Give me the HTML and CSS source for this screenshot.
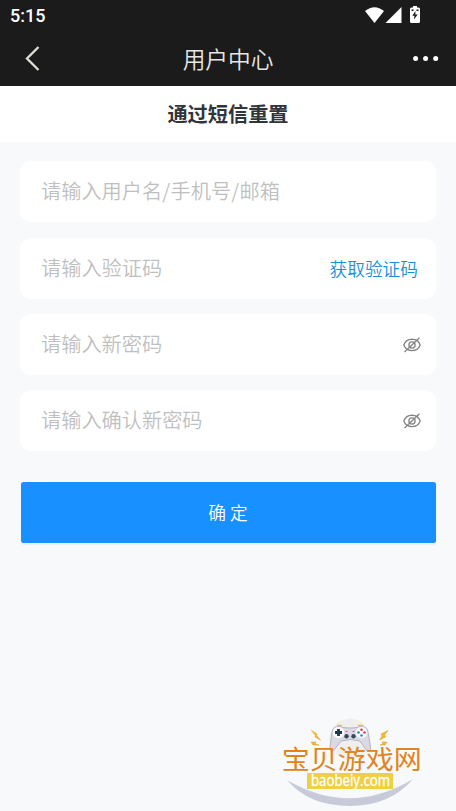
FILE: index.html
```html
<!DOCTYPE html>
<html lang="zh-CN">
<head>
<meta charset="utf-8">
<title>用户中心</title>
<link rel="stylesheet" href="styles.css">
</head>
<body>
<header class="top">
  <div class="status">
    <span class="clock">5:15</span>
    <svg class="status-icons" width="60" height="20" viewBox="0 0 60 20" fill="#fff">
      <path d="M0 5Q9.500-2.600 19 5L9.500 17Z"/>
      <path d="M20.500 17 36.500 1V17Z"/>
      <path d="M48 0H52V1.500H53.500Q55 1.500 55 3V15.500Q55 17 53.500 17H46.500Q45 17 45 15.500V3Q45 1.500 46.500 1.500H48Z"/>
      <path fill="#1b1b1b" d="M50.500 5 47.300 9.700H49.500L49 13.500 52.700 8.500H50.300ZM46.500 3.500H48.500V5H46.500ZM51.500 3.500H53.500V5H51.500Z"/>
    </svg>
  </div>
  <div class="nav">
    <svg class="back" width="16" height="26" viewBox="0 0 16 26"><path d="M13.500 1 2 12.500 13.500 24" fill="none" stroke="#deded9" stroke-width="2.300"/></svg>
    <h1 class="nav-title">用户中心</h1>
    <svg class="more" width="26" height="6" viewBox="0 0 26 6" fill="#fff"><circle cx="2.600" cy="2.500" r="2.500"/><circle cx="12.600" cy="2.500" r="2.500"/><circle cx="22.700" cy="2.500" r="2.500"/></svg>
  </div>
</header>
<h2 class="subtitle">通过短信重置</h2>
<main class="form">
  <div class="field field-first"><span class="hint">请输入用户名<span class="slash">/</span>手机号<span class="slash">/</span>邮箱</span></div>
  <div class="field field-code"><span class="hint">请输入验证码</span><a class="code">获取验证码</a></div>
  <div class="field"><span class="hint">请输入新密码</span>
    <svg class="eye" width="18" height="16" viewBox="0 0 18 16"><g fill="none" stroke="#858585" stroke-width="1.300"><path d="M.8 8C3.500.3 14.500.3 17.200 8 14.500 15.500 3.500 15.500.8 8Z"/><circle cx="9" cy="8" r="3.100"/><path d="M1.500 15 16.500.8"/></g></svg>
  </div>
  <div class="field"><span class="hint">请输入确认新密码</span>
    <svg class="eye" width="18" height="16" viewBox="0 0 18 16"><g fill="none" stroke="#858585" stroke-width="1.300"><path d="M.8 8C3.500.3 14.500.3 17.200 8 14.500 15.500 3.500 15.500.8 8Z"/><circle cx="9" cy="8" r="3.100"/><path d="M1.500 15 16.500.8"/></g></svg>
  </div>
  <button class="submit">确 定</button>
</main>
<svg class="watermark" width="186" height="101" viewBox="270 710 186 101">
  <circle cx="350" cy="739" r="20.500" fill="#efefed"/>
  <path d="M287 780Q350 817 413 779Q390 806 350 806Q309 806 287 780Z" fill="#c9cad9"/>
  <path d="M337 725.500H342M358 725.500H363" stroke="#e9bd55" stroke-width="1.600"/>
  <path d="M332 732Q333 726 340 726.500Q343 728 350 728Q357 728 360 726.500Q367 726 368 732L370.500 747Q371 752 367 751L360 741Q350 738 341 741L334 750Q330 753 330 747Z" fill="#d9dae4" stroke="#aeb0c2" stroke-width=".9"/>
  <circle cx="338.500" cy="732.500" r="5.800" fill="#fafafc"/><circle cx="361.500" cy="732.500" r="5.800" fill="#fafafc"/>
  <path d="M338.500 729V736M335 732.500H342" stroke="#20394b" stroke-width="2.800"/>
  <g fill="#e33d50"><circle cx="361.500" cy="729.700" r="1.300"/><circle cx="364.500" cy="732.500" r="1.300"/></g>
  <g fill="#2d8ba6"><circle cx="358.500" cy="732.500" r="1.300"/><circle cx="361.500" cy="735.500" r="1.300"/></g>
  <path d="M345.500 731.500H347.500M352.500 731.500H354.500" stroke="#e3558a"/>
  <g fill="#344d5c"><circle cx="346.500" cy="736.300" r="2.200"/><circle cx="353.500" cy="736.300" r="2.200"/></g>
  <g fill="#f2bd2c" stroke="#e79e35" stroke-width=".6"><path d="M311.500 730.500 317 734 316.500 735.500 320.500 740 315 737 315.500 735.500Z"/><path d="M388 730.500 381 734 382 736 379.500 740 386 736.500 384.500 735Z"/><path d="M311 742 316 742 315 744 319 745 313 745Z"/><path d="M387 742 382 742 383 744 380 745 385 745Z"/></g>
  <text class="brand" x="281.700" y="769.300" textLength="140" lengthAdjust="spacingAndGlyphs">宝贝游戏网</text>
  <rect x="307" y="773" width="86" height="16" fill="#edd044"/>
  <text class="domain" x="311" y="785.700" textLength="79" lengthAdjust="spacingAndGlyphs">baobeiy.com</text>
</svg>
</body>
</html>
```
FILE: styles.css
```css
* { box-sizing: border-box; }
body {
  margin: 0;
  height: 811px;
  overflow: hidden;
  background: #f7f9fb;
  font-family: "Noto Sans CJK SC", sans-serif;
}
.top { height: 86px; background: #1b1b1b; color: #fff; }
.status { height: 32px; display: flex; justify-content: space-between; padding: 6px 31px 0 10px; }
.clock { font: 500 18px/20px Roboto, sans-serif; }
.status-icons { display: block; }
.nav { height: 54px; display: grid; grid-template-columns: 60px 1fr 60px; align-items: center; }
.back { margin-left: 25px; }
.nav-title { margin: 0; padding-bottom: 1px; font-size: 22.700px; font-weight: 350; line-height: 32px; text-align: center; color: #e6e6e6; }
.more { margin-left: 17px; }
.subtitle { margin: 0; height: 56px; background: #fff; color: #30343b; font-size: 20.200px; font-weight: 700; line-height: 55px; text-align: center; }
.form { padding: 19px 20px 0; }
.field {
  height: 61px;
  margin-bottom: 15.300px;
  padding: 0 18px 0 21px;
  display: flex;
  align-items: center;
  justify-content: space-between;
  background: #fff;
  border-radius: 10px;
}
.field-first { margin-bottom: 15.800px; }
.hint { padding-bottom: 1.400px; color: #bfbfbf; font-size: 20.200px; font-weight: 350; line-height: 30px; white-space: nowrap; }
.field-code .hint { padding-bottom: 0; }
.slash { letter-spacing: .5px; }
.code { padding-bottom: 1px; color: #1890d8; font-size: 17.700px; font-weight: 350; line-height: 26px; }
.eye { margin-right: -3px; }
.submit {
  display: block;
  width: calc(100% - 1px);
  height: 61px;
  margin: 30.500px auto 0;
  padding: 0;
  border: 0;
  border-radius: 2.500px;
  background: #1890ff;
  box-shadow: 0 2px 1px rgba(0, 0, 0, .04);
  color: #fff;
  font: 350 17.700px/61px "Noto Sans CJK SC", sans-serif;
}
.watermark { position: absolute; left: 270px; top: 710px; }
.brand { font: 400 26.500px "Noto Sans CJK SC", sans-serif; fill: #df8520; }
.domain { font: 400 15.500px "Open Sans", sans-serif; fill: #fff; stroke: #fff; stroke-width: .3px; }
```
